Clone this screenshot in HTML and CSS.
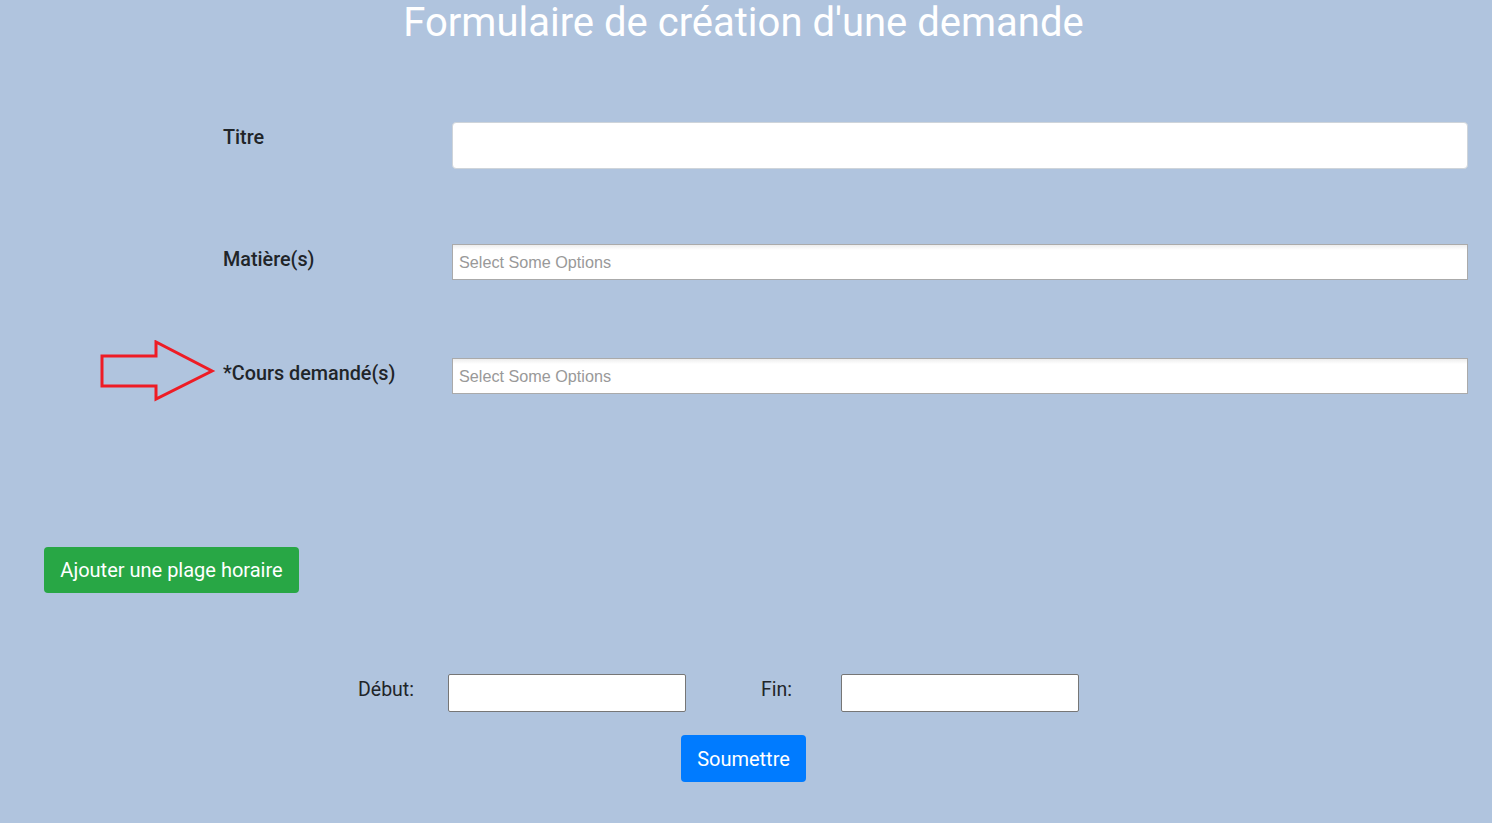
FILE: index.html
```html
<!DOCTYPE html>
<html lang="fr">
<head>
<meta charset="utf-8">
<title>Formulaire</title>
<link rel="stylesheet" href="styles.css">
</head>
<body>
<h1 class="title">Formulaire de création d'une demande</h1>
<form class="form">
  <div class="row row-titre">
    <label class="label">Titre</label>
    <input class="text-input" type="text">
  </div>
  <div class="row row-matiere">
    <label class="label">Matière(s)</label>
    <div class="chosen">Select Some Options</div>
  </div>
  <div class="row row-cours">
    <svg class="arrow" width="120" height="64" viewBox="0 0 120 64">
      <polygon points="2,16 56,16 56,2 112,31 56,59 56,46 2,46" fill="none" stroke="#ee1c25" stroke-width="3"/>
    </svg>
    <label class="label">*Cours demandé(s)</label>
    <div class="chosen">Select Some Options</div>
  </div>
  <div class="add-row">
    <button type="button" class="btn btn-green">Ajouter une plage horaire</button>
  </div>
  <div class="date-row">
    <label class="date-label">Début:</label>
    <input class="date-input" type="text">
    <label class="date-label fin">Fin:</label>
    <input class="date-input" type="text">
  </div>
  <div class="submit-row">
    <button type="submit" class="btn btn-blue">Soumettre</button>
  </div>
</form>
</body>
</html>
```

FILE: styles.css
```css
html, body {
  margin: 0;
  padding: 0;
}
body {
  background: #b0c4de;
  font-family: Roboto, "Liberation Sans", sans-serif;
  color: #212529;
  width: 1487px;
}
.title {
  margin: 0;
  padding-top: 0;
  height: 48px;
  line-height: 46px;
  text-align: center;
  font-weight: 400;
  font-size: 40px;
  color: #ffffff;
}
.form {
  display: flex;
  flex-direction: column;
}
.row {
  position: relative;
  display: flex;
  align-items: flex-start;
  padding-left: 223px;
  padding-right: 19px;
}
.label {
  width: 229px;
  flex: none;
  font-size: 19.8px;
  font-weight: 500;
  line-height: 30px;
  margin-top: 1px;
}
.row-titre {
  margin-top: 74px;
}
.text-input {
  flex: 1;
  box-sizing: border-box;
  height: 47px;
  margin: 0;
  border: 1px solid #ced4da;
  border-radius: 4px;
  background: #fff;
}
.row-matiere {
  margin-top: 75px;
}
.row-cours {
  margin-top: 78px;
}
.chosen {
  flex: 1;
  box-sizing: border-box;
  height: 36px;
  border: 1px solid #aaa;
  background: linear-gradient(#eee 1%, #fff 15%);
  font-family: "Liberation Sans", Arial, sans-serif;
  font-size: 16.2px;
  color: #999;
  padding: 8px 6px;
  line-height: 19px;
}
.arrow {
  position: absolute;
  left: 100px;
  top: -18px;
}
.add-row {
  margin-top: 153px;
  padding-left: 44px;
  display: flex;
}
.btn {
  border: none;
  border-radius: 4px;
  color: #fff;
  font-family: Roboto, "Liberation Sans", sans-serif;
  font-size: 20px;
  line-height: 30px;
  padding: 8px 16px;
  cursor: pointer;
}
.btn-green {
  background: #28a745;
  width: 255px;
  height: 46px;
  padding: 0;
}
.date-row {
  margin-top: 81px;
  padding-left: 358px;
  display: flex;
  align-items: flex-start;
}
.date-label {
  width: 90px;
  flex: none;
  font-size: 19.5px;
  line-height: 30px;
  margin-top: 1px;
  color: #212529;
}
.date-label.fin {
  width: 80px;
  margin-left: 75px;
}
.date-input {
  box-sizing: border-box;
  width: 238px;
  height: 38px;
  margin: 0;
  border: 1px solid #767676;
  border-radius: 2px;
  background: #fff;
}
.submit-row {
  margin-top: 23px;
  display: flex;
  justify-content: center;
}
.btn-blue {
  background: #007bff;
  width: 125px;
  height: 47px;
  padding: 0;
}
```
